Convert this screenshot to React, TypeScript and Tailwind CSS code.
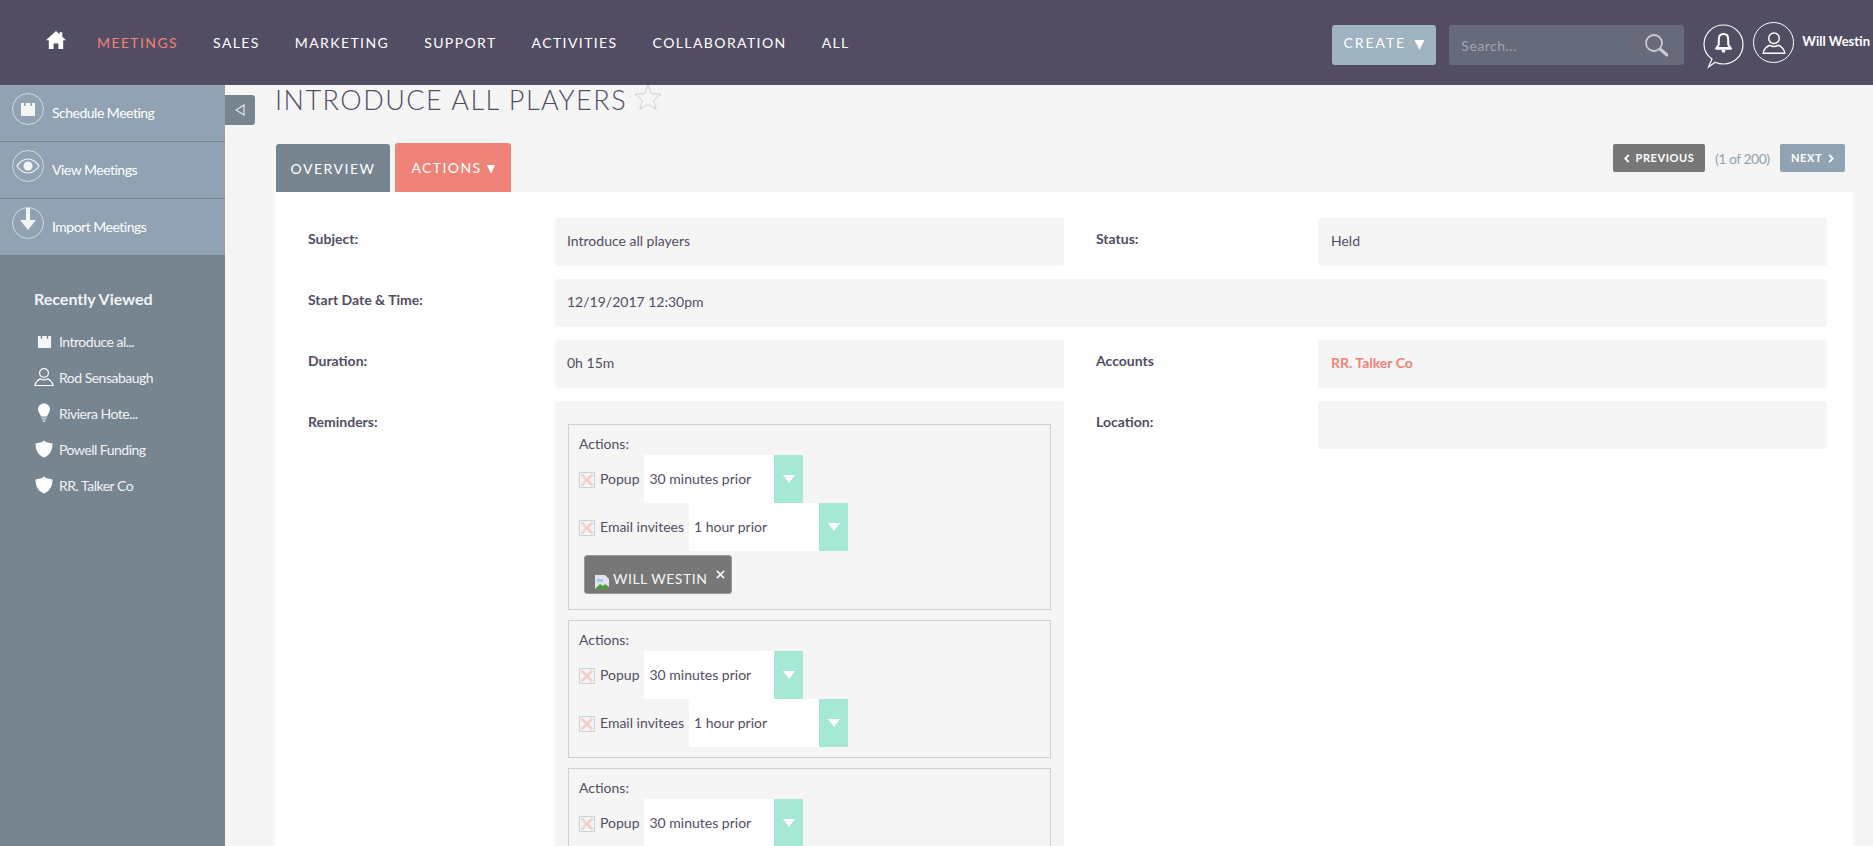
import React from 'react';

const navItems = ['SALES', 'MARKETING', 'SUPPORT', 'ACTIVITIES', 'COLLABORATION', 'ALL'];

const CalendarGlyph = ({ className }: { className: string }) => (
  <svg viewBox="0 0 16 16" className={className} fill="#f5f5f5">
    <path d="M1 2h3v3h1.500V2h5v3H12V2h3v13H1z" />
  </svg>
);

const ShieldGlyph = () => (
  <svg viewBox="0 0 18 18" className="h-[18px] w-[18px]" fill="#fff">
    <path d="M9 .5c2 1.700 5 2.700 8.500 2.900C17.500 10 15 15 9 17.500 3 15 .5 10 .5 3.400 4 3.200 7 2.200 9 .5z" />
  </svg>
);

const PersonGlyph = ({ className }: { className: string }) => (
  <svg viewBox="0 0 20 20" className={className} fill="none" stroke="currentColor" strokeWidth="1.200">
    <circle cx="10" cy="6" r="4.400" />
    <path d="M1 18.500c.2-3.600 3.400-6 5.600-6.600 2 1.200 4.800 1.200 6.800 0 2.200.6 5.400 3 5.600 6.600z" />
  </svg>
);

const BulbGlyph = () => (
  <svg viewBox="0 0 14 20" className="h-5 w-[14px]" fill="#fff">
    <path d="M7 .5c3.400 0 6 2.500 6 5.700 0 3-2.300 4.400-3 7.300H4C3.300 10.600 1 9.200 1 6.200 1 3 3.600.5 7 .5z" />
    <path d="M4.500 14.500h5v1.200h-5zM5 16.500h4v1H5zM6 18h2v1H6z" fill="#d5dade" />
  </svg>
);

const SideAction = ({ label, icon, last }: { label: string; icon: React.ReactNode; last?: boolean }) => (
  <div className={`flex items-center bg-[#91a3b3] pl-3 ${last ? 'h-[56px]' : 'h-[57px] border-b border-[#778591]'}`}>
    <span className="relative -mt-[8px] flex h-8 w-8 items-center justify-center rounded-full border border-[#d3dae0]">{icon}</span>
    <span className="ml-2 pb-[2px] text-[14px] tracking-[-0.5px] text-white">{label}</span>
  </div>
);

const RecentItem = ({ label, icon }: { label: string; icon: React.ReactNode }) => (
  <div className="flex h-9 items-center">
    <span className="flex w-[25px] shrink-0 justify-center pl-[1px] pr-[6px]">{icon}</span>
    <span className="text-[14px] tracking-[-0.5px] text-[#f2f4f5]">{label}</span>
  </div>
);

const Checkbox = () => (
  <svg viewBox="0 0 16 16" className="mt-[2px] h-4 w-4 shrink-0">
    <rect x=".5" y=".5" width="15" height="15" fill="#f5f5f5" stroke="#c9d2d9" />
    <path d="M2.500 2.500l11 11M13.500 2.500l-11 11" stroke="#f4cfcb" strokeWidth="2.600" />
  </svg>
);

const Select = ({ value }: { value: string }) => (
  <div className="ml-[5px] flex h-12 w-[159px] items-center bg-white">
    <span className="flex-1 pb-[2px] pl-[5px] text-[14px] text-[#534d64]">{value}</span>
    <span className="flex h-12 w-[29px] items-center justify-center bg-[#a5e8d6]">
      <svg viewBox="0 0 12 8" className="h-2 w-3" fill="#fff">
        <path d="M0 0h12L6 8z" />
      </svg>
    </span>
  </div>
);

const ReminderRow = ({ label, value }: { label: string; value: string }) => (
  <div className="flex h-12 items-center">
    <Checkbox />
    <span className="ml-[5px] pb-[2px] text-[14px] text-[#534d64]">{label}</span>
    <Select value={value} />
  </div>
);

const Reminder = ({ tag, popupOnly }: { tag?: boolean; popupOnly?: boolean }) => (
  <div className={`border border-[#d0d0d0] pl-[10px] pt-2 ${tag ? 'pb-[15px]' : 'pb-[10px]'}`}>
    <div className="h-[22px] text-[14px] leading-[22px] text-[#534d64]">Actions:</div>
    <ReminderRow label="Popup" value="30 minutes prior" />
    {!popupOnly && <ReminderRow label="Email invitees" value="1 hour prior" />}
    {tag && (
      <div className="ml-[5px] mt-1 flex h-[39px] w-[148px] items-start rounded-[3px] border border-[#9a9a9a] bg-[#777777] pl-[9px]">
        <svg viewBox="0 0 16 16" className="mt-[18px] h-4 w-4 shrink-0">
          <path d="M1 1h10l4 4v10H1z" fill="#dfe6ee" />
          <path d="M1 15l5-5 3 2 2-2 4 3v2z" fill="#4f9a3a" />
          <path d="M3 5h6v3H3z" fill="#a9c4e8" />
        </svg>
        <span className="ml-[3px] mt-[12px] text-[14px] leading-[22px] tracking-[0.5px] text-[#f5f5f5]">WILL WESTIN</span>
        <svg viewBox="0 0 10 10" className="ml-[9px] mt-[14px] h-[9px] w-[9px]" stroke="#f5f5f5" strokeWidth="1.800">
          <path d="M1 1l8 8M9 1L1 9" />
        </svg>
      </div>
    )}
  </div>
);

const Label = ({ children, className = '' }: { children: React.ReactNode; className?: string }) => (
  <div className={`shrink-0 pt-[10px] text-[14px] font-bold leading-[22px] text-[#534d64] ${className}`}>{children}</div>
);

const Value = ({ children, className = 'w-[509px]' }: { children?: React.ReactNode; className?: string }) => (
  <div className={`flex h-12 items-center rounded-[3px] bg-[#f5f5f5] px-3 pb-[4px] text-[14px] text-[#534d64] ${className}`}>{children}</div>
);

export default function App() {
  return (
    <div className="flex h-screen flex-col overflow-hidden bg-[#f5f5f5] font-['Lato',sans-serif]">
      <header className="flex h-[85px] shrink-0 items-start bg-[#534d64] text-white">
        <svg viewBox="0 0 20 18" className="ml-[46px] mt-[31px] h-[18px] w-5" fill="#fff">
          <path d="M10 0l3.500 3.200V1.200h2.800v4.600L20 9.300h-2.800V18h-4.800v-5.600H7.600V18H2.800V9.300H0z" />
        </svg>
        <nav className="ml-[31px] flex h-[85px] gap-[35px] pt-[33px] text-[14px] leading-5 tracking-[1.4px]">
          <span className="text-[#f08377]">MEETINGS</span>
          {navItems.map(n => (
            <span key={n}>{n}</span>
          ))}
        </nav>
        <div className="ml-auto flex items-start pt-[25px]">
          <div className="flex h-10 w-[104px] items-center justify-center rounded-[3px] bg-[#a0b3c1] text-[14px] tracking-[1.9px]">
            <span className="pb-[6px]">CREATE</span>
            <svg viewBox="0 0 10 10" className="ml-[8px] h-[10px] w-[11px]" fill="#fff">
              <path d="M0 0h10L5 10z" />
            </svg>
          </div>
          <div className="ml-[13px] flex h-10 w-[235px] items-center rounded-[3px] bg-[#666a7a] pl-3 pr-[16px]">
            <span className="flex-1 text-[14px] tracking-[0.5px] text-[#a3a3b3]">Search...</span>
            <svg viewBox="0 0 24 24" className="h-6 w-6" fill="none" stroke="#c9ccd2">
              <circle cx="10" cy="10" r="8" strokeWidth="1.800" />
              <path d="M16 16l7 6" strokeWidth="3" strokeLinecap="round" />
            </svg>
          </div>
          <svg viewBox="0 0 42 46" className="-mt-[2px] ml-[19px] h-[46px] w-[42px]" fill="none">
            <path d="M9 36C4 32.500 1 27.500 1 21.500 1 10.500 9.800 2 20.500 2S40 10.500 40 21.500 31.200 41 20.500 41c-3 0-5.800-.6-8.300-1.800L5.500 44z" stroke="#fff" strokeWidth="1.200" />
            <path d="M20.500 11c3 0 4.700 2.300 4.700 5.400v5.100l2.300 3.500h-14l2.300-3.500v-5.100c0-3.100 1.700-5.400 4.700-5.400z" stroke="#fff" strokeWidth="2" />
            <path d="M12.500 25h16v1.800h-16zM18.500 27h4l-.8 2.500h-2.400z" fill="#fff" />
          </svg>
          <span className="-mt-[3px] ml-[8px] flex h-[41px] w-[41px] items-center justify-center rounded-full border border-white">
            <PersonGlyph className="h-6 w-6" />
          </span>
          <span className="ml-2 mt-[6px] whitespace-nowrap pr-[3px] text-[13px] font-bold leading-5 tracking-[0px]">Will Westin</span>
        </div>
      </header>

      <div className="flex min-h-0 flex-1">
        <aside className="relative w-[225px] shrink-0 bg-[#778591]">
          <SideAction label="Schedule Meeting" icon={<CalendarGlyph className="h-4 w-4" />} />
          <SideAction
            label="View Meetings"
            icon={
              <svg viewBox="0 0 24 16" className="h-4 w-6" fill="none" stroke="#f2f4f5" strokeWidth="1.200">
                <path d="M1 8c3-4.500 6.800-7 11-7s8 2.500 11 7c-3 4.500-6.800 7-11 7S4 12.500 1 8z" />
                <circle cx="12" cy="8" r="4.500" fill="#f2f4f5" stroke="none" />
              </svg>
            }
          />
          <SideAction
            label="Import Meetings"
            last
            icon={
              <svg viewBox="0 0 16 22" className="-mt-[8px] h-[22px] w-4" fill="#f2f4f5">
                <path d="M6 0h4v12h6l-8 10-8-10h6z" />
              </svg>
            }
          />
          <div className="absolute left-[225px] top-[10px] flex h-[30px] w-[30px] items-center justify-center rounded-r-[3px] bg-[#778591]">
            <svg viewBox="0 0 10 12" className="h-3 w-[10px]" fill="none" stroke="#e4e8eb" strokeWidth="1.200">
              <path d="M9 1v10L1 6z" />
            </svg>
          </div>
          <div className="pl-[34px] pt-[33px]">
            <div className="h-[22px] text-[16px] font-bold leading-[22px] text-[#f2f4f5]">Recently Viewed</div>
            <div className="mt-[13px]">
              <RecentItem label="Introduce al..." icon={<CalendarGlyph className="h-[15px] w-[15px]" />} />
              <RecentItem label="Rod Sensabaugh" icon={<PersonGlyph className="h-5 w-5 shrink-0 text-white" />} />
              <RecentItem label="Riviera Hote..." icon={<BulbGlyph />} />
              <RecentItem label="Powell Funding" icon={<ShieldGlyph />} />
              <RecentItem label="RR. Talker Co" icon={<ShieldGlyph />} />
            </div>
          </div>
        </aside>

        <main className="min-w-0 flex-1 pl-[50px] pr-[20px]">
          <div className="flex h-[58px] items-start">
            <h1 className="mt-[-1px] whitespace-nowrap text-[27px] font-light leading-[32px] tracking-[1.500px] text-[#534d64]">
              INTRODUCE ALL PLAYERS
            </h1>
            <svg viewBox="0 0 28 26" className="-mt-[1px] ml-[7px] h-[26px] w-7" fill="none" stroke="#cbd2d8">
              <path d="M14 1l3.500 8.500 9.500.7-7.200 6 2.300 9L14 20.300 5.900 25.200l2.300-9-7.200-6 9.500-.7z" />
            </svg>
          </div>

          <div className="flex h-[49px] items-start">
            <div className="ml-[1px] mt-[1px] flex h-[48px] w-[114px] items-center justify-center rounded-t-[3px] bg-[#778591] text-[14px] tracking-[1.500px] text-white">
              OVERVIEW
            </div>
            <div className="ml-[5px] flex h-[49px] w-[116px] items-center justify-center rounded-t-[3px] bg-[#f08377] text-[14px] tracking-[1.400px] text-white">
              ACTIONS
              <svg viewBox="0 0 8 9" className="ml-[5px] mt-[3px] h-[9px] w-2" fill="#fff">
                <path d="M0 0h8L4 9z" />
              </svg>
            </div>
            <div className="ml-auto mr-[8px] mt-[1px] flex items-center text-[11px] font-bold tracking-[0.6px] text-white">
              <div className="flex h-[28px] w-[92px] items-center justify-center rounded-[2px] bg-[#777777]">
                <svg viewBox="0 0 6 10" className="mr-[6px] h-[9px] w-[6px]" fill="none" stroke="#fff" strokeWidth="2">
                  <path d="M5 1L1 5l4 4" />
                </svg>
                PREVIOUS
              </div>
              <span className="ml-[10px] w-[55px] whitespace-nowrap text-[14px] font-normal tracking-[-0.5px] text-[#91a3b3]">(1 of 200)</span>
              <div className="ml-[10px] flex h-[28px] w-[65px] items-center justify-center rounded-[2px] bg-[#91a3b3]">
                NEXT
                <svg viewBox="0 0 6 10" className="ml-[6px] h-[9px] w-[6px]" fill="none" stroke="#fff" strokeWidth="2">
                  <path d="M1 1l4 4-4 4" />
                </svg>
              </div>
            </div>
          </div>

          <section className="min-h-[700px] rounded-t-[3px] bg-white pl-[33px] pt-[26px]">
            <div className="flex">
              <Label className="w-[247px]">Subject:</Label>
              <Value>Introduce all players</Value>
              <Label className="ml-[32px] w-[222px]">Status:</Label>
              <Value className="w-[509px] pl-[13px]">Held</Value>
            </div>
            <div className="mt-[13px] flex">
              <Label className="w-[247px]">Start Date &amp; Time:</Label>
              <Value className="w-[1272px]">12/19/2017 12:30pm</Value>
            </div>
            <div className="mt-[13px] flex">
              <Label className="w-[247px]">Duration:</Label>
              <Value>0h 15m</Value>
              <Label className="ml-[32px] w-[222px]">Accounts</Label>
              <Value className="w-[509px] pl-[13px] font-bold text-[#f08377]">RR. Talker Co</Value>
            </div>
            <div className="mt-[13px] flex items-start">
              <Label className="w-[247px]">Reminders:</Label>
              <div className="flex w-[509px] flex-col gap-[10px] rounded-[3px] bg-[#f5f5f5] px-[13px] pt-[23px]">
                <Reminder tag />
                <Reminder />
                <Reminder popupOnly />
              </div>
              <Label className="ml-[32px] w-[222px]">Location:</Label>
              <Value />
            </div>
          </section>
        </main>
      </div>
    </div>
  );
}
